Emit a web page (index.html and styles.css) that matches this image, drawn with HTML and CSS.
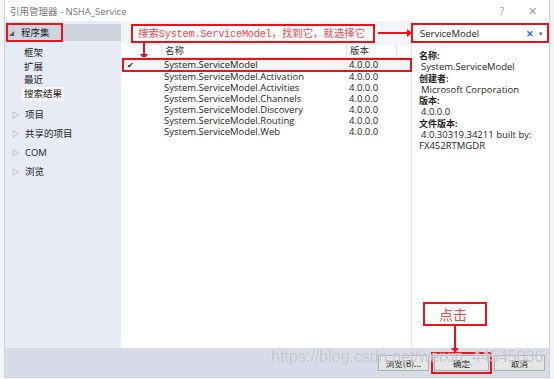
FILE: index.html
```html
<!DOCTYPE html>
<html lang="zh-CN">
<head>
    <meta charset="UTF-8">
    <title>引用管理器 - NSHA_Service</title>
    <link rel="stylesheet" href="styles.css">
</head>
<body>
<div class="window">
    <div class="titlebar">
        <span class="title">引用管理器 - NSHA_Service</span>
        <span class="title-btn">?</span>
        <span class="title-btn close">✕</span>
    </div>

    <div class="body">
        <div class="sidebar">
            <div class="group open">
                <span class="tri">◢</span>程序集
                <div class="mark mark-group"></div>
            </div>
            <div class="sub">框架</div>
            <div class="sub">扩展</div>
            <div class="sub">最近</div>
            <div class="sub last"><span class="selected">搜索结果</span></div>
            <div class="group"><span class="tri closed">▷</span>项目</div>
            <div class="group"><span class="tri closed">▷</span>共享的项目</div>
            <div class="group"><span class="tri closed">▷</span>COM</div>
            <div class="group"><span class="tri closed">▷</span>浏览</div>
        </div>

        <div class="main">
            <div class="toolbar">
                <div class="note note-search">搜索<span class="mono">System.ServiceModel</span>，找到它，就选择它</div>
                <div class="arrow-right"></div>
                <div class="arrow-down"></div>
            </div>
            <div class="list">
                <div class="row head">
                    <span></span><span>名称</span><span>版本</span><span></span>
                </div>
                <div class="row checked">
                    <span class="check">✔</span><span>System.ServiceModel</span><span>4.0.0.0</span><span></span>
                    <div class="mark mark-row"></div>
                </div>
                <div class="row"><span></span><span>System.ServiceModel.Activation</span><span>4.0.0.0</span><span></span></div>
                <div class="row"><span></span><span>System.ServiceModel.Activities</span><span>4.0.0.0</span><span></span></div>
                <div class="row"><span></span><span>System.ServiceModel.Channels</span><span>4.0.0.0</span><span></span></div>
                <div class="row"><span></span><span>System.ServiceModel.Discovery</span><span>4.0.0.0</span><span></span></div>
                <div class="row"><span></span><span>System.ServiceModel.Routing</span><span>4.0.0.0</span><span></span></div>
                <div class="row"><span></span><span>System.ServiceModel.Web</span><span>4.0.0.0</span><span></span></div>
            </div>
        </div>

        <div class="details">
            <div class="search">
                <span class="search-text">ServiceModel</span>
                <span class="clear">✕</span>
                <span class="drop">▾</span>
            </div>
            <div class="info">
                <div class="label">名称:</div>
                <div class="value">System.ServiceModel</div>
                <div class="label">创建者:</div>
                <div class="value">Microsoft Corporation</div>
                <div class="label">版本:</div>
                <div class="value">4.0.0.0</div>
                <div class="label">文件版本:</div>
                <div class="value">4.0.30319.34211 built by:</div>
                <div class="value flush">FX452RTMGDR</div>
            </div>
        </div>
    </div>

    <div class="footer">
        <button class="btn">浏览(B)...</button>
        <button class="btn ok">确定</button>
        <button class="btn">取消</button>
        <div class="note note-click">点击</div>
        <div class="arrow-click"></div>
        <div class="watermark">https://blog.csdn.net/weixin_44545036</div>
    </div>
</div>
</body>
</html>
```

FILE: styles.css
```css
:root {
    --side: #e6ebf5;
    --foot: #d6dbe7;
    --line: #e3e5ea;
    --text: #1e1e1e;
    --red: #e8141c;
    --note: #f0474c;
}

* {
    margin: 0;
    padding: 0;
    box-sizing: border-box;
}

body {
    background: #f4f4f4;
    font-family: "Open Sans", "Noto Sans CJK SC", sans-serif;
    font-size: 9.5px;
    color: var(--text);
    overflow: hidden;
}

.window {
    margin-left: 4px;
    width: 546px;
    height: 378px;
    background: #fff;
    border: 1px solid #cfd3da;
    border-top: none;
    display: flex;
    flex-direction: column;
}

/* title bar */
.titlebar {
    height: 21px;
    display: flex;
    align-items: center;
    padding-left: 5px;
    color: #777;
    font-size: 9.5px;
    background: #fff;
}

.title {
    flex: 1;
}

.title-btn {
    width: 30px;
    text-align: center;
    color: #9a9a9a;
    font-size: 10px;
}

.title-btn.close {
    font-size: 11px;
    margin-right: 2px;
}

.body {
    flex: 1;
    display: flex;
    min-height: 0;
}

/* sidebar */
.sidebar {
    width: 116px;
    background: var(--side);
    padding-top: 3px;
}

.group {
    position: relative;
    height: 19px;
    line-height: 19px;
    padding-left: 4px;
    font-size: 9.5px;
}

.group.open {
    height: 17px;
    line-height: 17px;
    background: #cfd4de;
    margin-bottom: 5px;
}

.tri {
    display: inline-block;
    width: 12px;
    font-size: 5px;
    color: #555;
    vertical-align: 1px;
}

.tri.closed {
    font-size: 7px;
    color: #777;
    padding-left: 3px;
    width: 16px;
}

.sub {
    height: 13.5px;
    line-height: 13.5px;
    padding-left: 19px;
    font-size: 9.5px;
}

.sub.last {
    margin-bottom: 5px;
}

.selected {
    display: inline-block;
    background: #f7f7f9;
    margin-left: -2px;
    padding: 0 2px;
    height: 14px;
}

/* middle */
.main {
    width: 290px;
    display: flex;
    flex-direction: column;
}

.toolbar {
    position: relative;
    height: 24px;
    background: #f2f4f8;
}

.list {
    flex: 1;
    background: #fff;
}

.row {
    position: relative;
    display: grid;
    grid-template-columns: 40px 185px 50px 1fr;
    height: 11px;
    line-height: 11px;
    font-size: 9.5px;
}

.row span {
    padding-left: 3px;
    white-space: nowrap;
}

.row.head {
    height: 13px;
    line-height: 12px;
    color: #333;
    border-bottom: 1px solid var(--line);
    margin-bottom: 1px;
}

.row.head span + span {
    border-left: 1px solid var(--line);
}

.row.checked {
    height: 12px;
    line-height: 12px;
    background: #f4f4f4;
}

.check {
    font-size: 8px;
    padding-left: 6px !important;
}

/* details */
.details {
    flex: 1;
    display: flex;
    flex-direction: column;
    border-left: 1px solid var(--line);
}

.search {
    display: flex;
    align-items: center;
    margin-left: -1px;
    padding: 0 4px 0 7px;
    background: #fff;
    border: 2px solid var(--red);
    height: 20px;
    margin-top: 2px;
    margin-bottom: 2px;
    font-size: 9.5px;
}

.search-text {
    flex: 1;
}

.clear {
    color: #1e6fd0;
    font-size: 9px;
    font-weight: bold;
    margin-right: 5px;
}

.drop {
    color: #666;
    font-size: 7px;
}

.info {
    padding: 5px 0 0 7px;
}

.label {
    font-weight: bold;
    height: 11px;
    line-height: 11px;
    font-size: 9px;
}

.value {
    height: 11.5px;
    line-height: 11.5px;
    padding-left: 2px;
    font-size: 9.5px;
}

.value.flush {
    padding-left: 0;
}

/* footer */
.footer {
    position: relative;
    height: 29px;
    background: var(--foot);
    display: flex;
    justify-content: flex-end;
    align-items: center;
    gap: 5px;
    padding-right: 4px;
}

.btn {
    width: 51px;
    height: 16px;
    font-family: "Noto Sans CJK SC", sans-serif;
    font-size: 8.5px;
    background: #e6e6e6;
    border: 1px solid #adadad;
    color: #222;
}

.btn.ok {
    width: 55px;
    outline: 2px solid var(--red);
    outline-offset: 1px;
}

.watermark {
    position: absolute;
    left: 266px;
    top: 0;
    font-family: "Liberation Sans", sans-serif;
    font-size: 16px;
    color: rgba(165, 170, 182, 0.7);
    text-shadow: 0 0 1px #fff;
    pointer-events: none;
}

/* annotations */
.mark {
    position: absolute;
    border: 2px solid var(--red);
    pointer-events: none;
}

.mark-group {
    left: 1px;
    top: -1px;
    width: 57px;
    height: 19px;
}

.mark-row {
    left: 1px;
    top: -1px;
    width: 290px;
    height: 14px;
}

.note {
    position: absolute;
    border: 2px solid var(--red);
    color: var(--note);
    background: #fff;
    font-family: "Liberation Serif", "Noto Sans CJK SC", serif;
    white-space: nowrap;
}

.note-search {
    left: 10px;
    top: 3px;
    width: 244px;
    height: 19px;
    line-height: 15px;
    padding-left: 5px;
    font-size: 10.4px;
    background: #fbfbfd;
}

.mono {
    font-family: "Liberation Mono", monospace;
    letter-spacing: -0.3px;
}

.arrow-right {
    position: absolute;
    left: 257px;
    top: 11px;
    width: 30px;
    height: 2px;
    background: var(--red);
}

.arrow-right::after {
    content: "";
    position: absolute;
    right: -4px;
    top: -3px;
    border-left: 5px solid var(--red);
    border-top: 4px solid transparent;
    border-bottom: 4px solid transparent;
}

.arrow-down {
    position: absolute;
    left: 22px;
    top: 22px;
    width: 2px;
    height: 12px;
    background: var(--red);
}

.arrow-down::after,
.arrow-click::after {
    content: "";
    position: absolute;
    left: -3px;
    bottom: -4px;
    border-top: 5px solid var(--red);
    border-left: 4px solid transparent;
    border-right: 4px solid transparent;
}

.note-click {
    left: 418px;
    top: -46px;
    width: 64px;
    height: 24px;
    line-height: 20px;
    padding-left: 14px;
    font-family: "Noto Sans CJK SC", sans-serif;
    font-size: 14px;
}

.arrow-click {
    position: absolute;
    left: 449px;
    top: -22px;
    width: 2px;
    height: 23px;
    background: var(--red);
}
```
